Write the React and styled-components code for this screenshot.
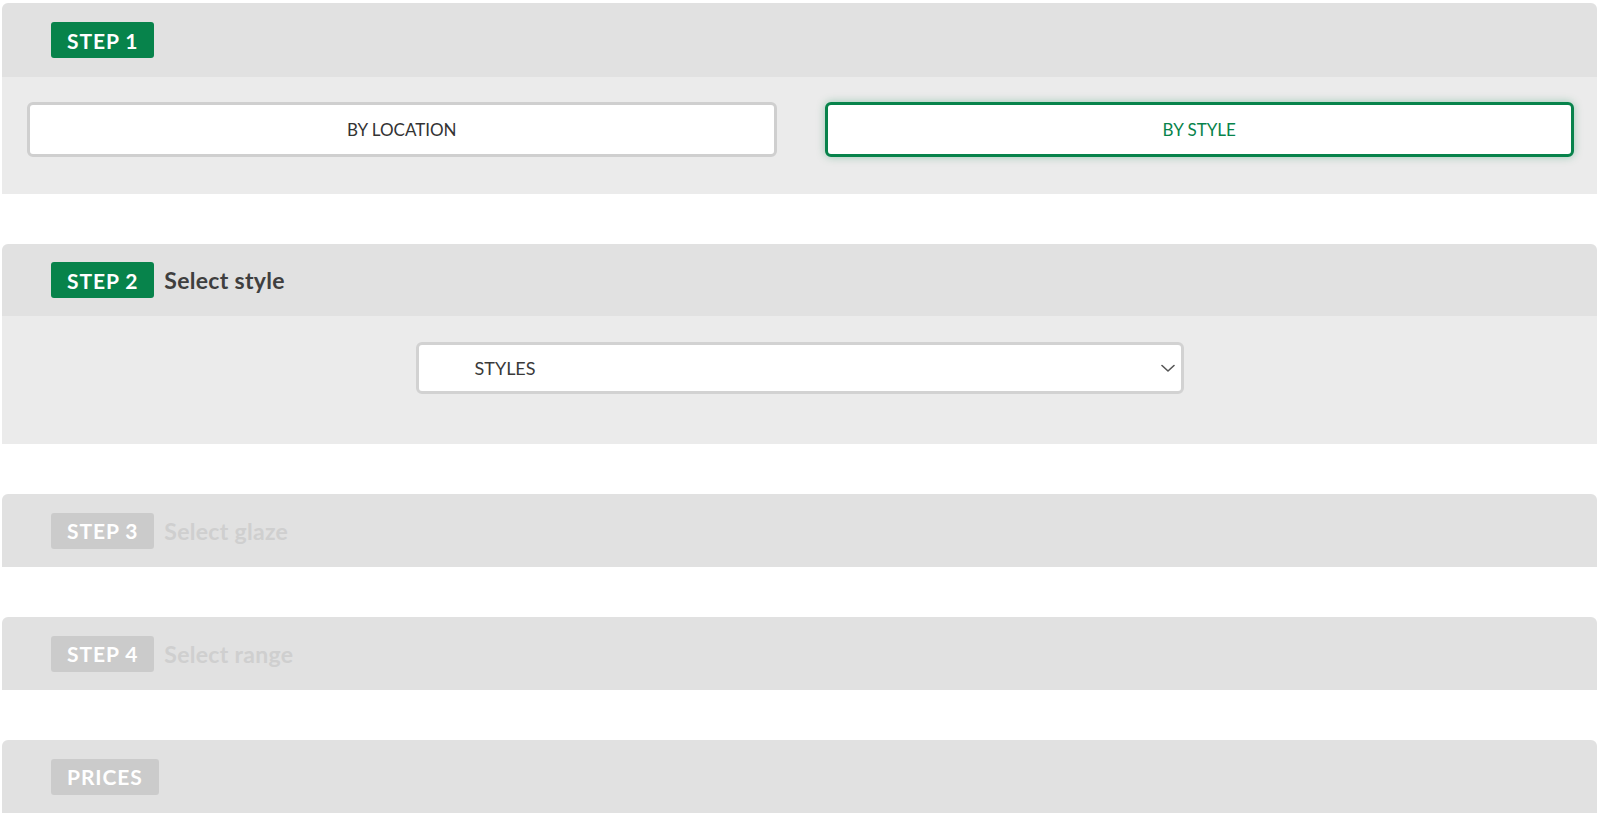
import React from "react";
import styled, { createGlobalStyle, css } from "styled-components";

const GlobalStyle = createGlobalStyle`
  html, body {
    margin: 0;
    padding: 0;
    background: #ffffff;
    overflow: hidden;
  }
  body {
    font-family: Lato, "Open Sans", Arial, sans-serif;
  }
  * { box-sizing: border-box; }
`;

const Page = styled.div`
  display: flex;
  flex-direction: column;
  gap: 50px;
  padding: 3px 3px 0 2px;
`;

const Panel = styled.section`
  display: flex;
  flex-direction: column;
  border-radius: 6px 6px 0 0;
  overflow: hidden;
`;

const Header = styled.header`
  display: flex;
  align-items: center;
  gap: 10px;
  height: ${(p) => p.$h || 73}px;
  padding-left: 49px;
  background: #e1e1e1;
`;

const Badge = styled.span`
  display: inline-flex;
  align-items: center;
  justify-content: center;
  height: 36px;
  padding: 0 16px;
  border-radius: 3px;
  background: ${(p) => (p.$disabled ? "#cbcbcb" : "#07834b")};
  color: #ffffff;
  font-family: Lato, "Open Sans", sans-serif;
  font-weight: 700;
  font-size: 21px;
  letter-spacing: 0.9px;
`;

const Title = styled.h2`
  margin: 0;
  font-family: Lato, "Open Sans", sans-serif;
  font-weight: 700;
  font-size: 23px;
  letter-spacing: 0.3px;
  color: ${(p) => (p.$disabled ? "#cfcfcf" : "#3f3f3f")};
`;

const Body = styled.div`
  background: #ebebeb;
  padding: ${(p) => p.$pad};
`;

const ChoiceGrid = styled.div`
  display: grid;
  grid-template-columns: 1fr 1fr;
  gap: 48px;
`;

const Choice = styled.button`
  height: 55px;
  border-radius: 6px;
  background: #ffffff;
  font-family: Lato, "Open Sans", sans-serif;
  font-size: 17px;
  font-weight: 400;
  cursor: pointer;
  ${(p) =>
    p.$active
      ? css`
          border: 3px solid #07834b;
          color: #07834b;
          box-shadow: 0 0 8px rgba(7, 131, 75, 0.35);
        `
      : css`
          border: 3px solid #cfcfcf;
          color: #333333;
        `}
`;

const Select = styled.div`
  display: flex;
  align-items: center;
  justify-content: space-between;
  width: 768px;
  height: 52px;
  margin: 0 auto;
  padding: 0 6px 0 56px;
  background: #ffffff;
  border: 3px solid #d2d2d2;
  border-radius: 6px;
  font-family: Lato, "Open Sans", sans-serif;
  font-size: 18px;
  color: #3a3a3a;
`;

const Chevron = () => (
  <svg width="14" height="9" viewBox="0 0 14 9" fill="none">
    <polyline points="1,1.5 7,7 13,1.5" stroke="#555" strokeWidth="1.6" strokeLinecap="round" strokeLinejoin="round" />
  </svg>
);

export default function App() {
  return (
    <>
      <GlobalStyle />
      <Page>
        <Panel>
          <Header $h={74}>
            <Badge>STEP 1</Badge>
          </Header>
          <Body $pad="25px 23px 37px 25px">
            <ChoiceGrid>
              <Choice>BY LOCATION</Choice>
              <Choice $active>BY STYLE</Choice>
            </ChoiceGrid>
          </Body>
        </Panel>

        <Panel>
          <Header $h={72}>
            <Badge>STEP 2</Badge>
            <Title>Select style</Title>
          </Header>
          <Body $pad="26px 0 50px">
            <Select>
              <span>STYLES</span>
              <Chevron />
            </Select>
          </Body>
        </Panel>

        <Panel>
          <Header>
            <Badge $disabled>STEP 3</Badge>
            <Title $disabled>Select glaze</Title>
          </Header>
        </Panel>

        <Panel>
          <Header>
            <Badge $disabled>STEP 4</Badge>
            <Title $disabled>Select range</Title>
          </Header>
        </Panel>

        <Panel>
          <Header>
            <Badge $disabled>PRICES</Badge>
          </Header>
        </Panel>
      </Page>
    </>
  );
}
